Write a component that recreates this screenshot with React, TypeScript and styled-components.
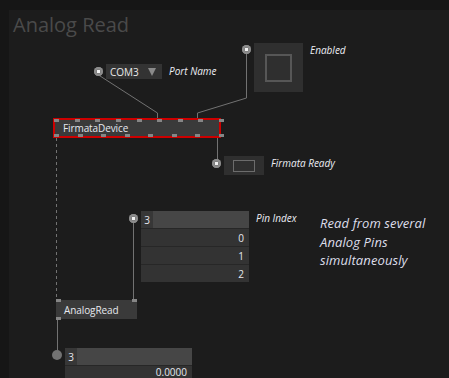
import React from "react";
import styled, { createGlobalStyle } from "styled-components";

const Global = createGlobalStyle`
  html, body { margin: 0; padding: 0; background: #161616; }
  body { font-family: "Open Sans", "Noto Sans", sans-serif; }
`;

type Pos = { $x: number; $y: number };

const Page = styled.div`
  position: relative;
  width: 449px;
  height: 378px;
  overflow: hidden;
  box-sizing: border-box;
  padding: 10px 0 0 9px;
  display: flex;
  background: #161616;
`;

const Patch = styled.div`
  flex: 1;
  background: #1c1c1c;
  padding: 2px 0 0 4px;
`;

const Title = styled.h1`
  margin: 0;
  font-weight: 400;
  font-size: 20px;
  line-height: 26px;
  color: #4a4a4a;
`;

const Links = styled.svg`
  position: absolute;
  left: 0;
  top: 0;
  pointer-events: none;
`;

/* An IO box on the canvas: pin, box and label laid out in a row */
const IOGroup = styled.div<Pos>`
  position: absolute;
  left: ${(p) => p.$x}px;
  top: ${(p) => p.$y}px;
  display: flex;
  align-items: flex-start;
  gap: 3px;
`;

const PinDot = styled.div<{ $solid?: boolean; $dy?: number }>`
  position: relative;
  flex: none;
  margin-top: ${(p) => p.$dy ?? (p.$solid ? 2 : 3)}px;
  width: ${(p) => (p.$solid ? 10 : 9)}px;
  height: ${(p) => (p.$solid ? 10 : 9)}px;
  border-radius: 50%;
  background: ${(p) => (p.$solid ? "#727272" : "#7e7e7e")};
  box-shadow: ${(p) => (p.$solid ? "none" : "inset 0 0 0 2px #8c8c8c")};
  &::after {
    content: "";
    display: ${(p) => (p.$solid ? "none" : "block")};
    position: absolute;
    left: 3px;
    top: 3px;
    width: 3px;
    height: 3px;
    background: #f2f2f2;
  }
`;

const Label = styled.div`
  margin-left: 4px;
  font-style: italic;
  font-size: 10px;
  line-height: 14px;
  color: #eceef4;
  white-space: nowrap;
`;

const Comment = styled.div<Pos>`
  position: absolute;
  left: ${(p) => p.$x}px;
  top: ${(p) => p.$y}px;
  font-style: italic;
  font-size: 13px;
  letter-spacing: 0.1px;
  line-height: 18.5px;
  color: #dcdeea;
`;

const EnumBox = styled.div`
  width: 56px;
  height: 15px;
  background: #333;
  display: flex;
  align-items: center;
  justify-content: space-between;
  box-sizing: border-box;
  padding: 0 6px 0 4px;
  font-size: 10px;
  color: #eaeaea;
`;

const Arrow = styled.span`
  width: 0;
  height: 0;
  border-left: 4.5px solid transparent;
  border-right: 4.5px solid transparent;
  border-top: 8px solid #8a8a8a;
`;

const ToggleBox = styled.div<{ $w: number; $h: number }>`
  width: ${(p) => p.$w}px;
  height: ${(p) => p.$h}px;
  background: #2f2f2f;
  display: flex;
  align-items: center;
  justify-content: center;
`;

const ToggleMark = styled.div<{ $w: number; $h: number; $b: number; $c: string }>`
  width: ${(p) => p.$w}px;
  height: ${(p) => p.$h}px;
  box-sizing: border-box;
  border: ${(p) => p.$b}px solid ${(p) => p.$c};
`;

const Node = styled.div<Pos & { $w: number; $h: number; $selected?: boolean }>`
  position: absolute;
  left: ${(p) => p.$x}px;
  top: ${(p) => p.$y}px;
  width: ${(p) => p.$w}px;
  height: ${(p) => p.$h}px;
  box-sizing: border-box;
  background: #3a3a3a;
  border: ${(p) => (p.$selected ? "2px solid #cc0000" : "none")};
  padding-left: 8px;
  display: flex;
  align-items: center;
  font-size: 10px;
  letter-spacing: -0.1px;
  color: #e6e8ee;
`;

const NodePin = styled.span<{ $left: number; $bottom?: boolean }>`
  position: absolute;
  left: ${(p) => p.$left}px;
  ${(p) => (p.$bottom ? "bottom: -1px;" : "top: -1px;")}
  width: 5px;
  height: 3px;
  background: #868686;
`;

const Spread = styled.div<{ $w: number }>`
  width: ${(p) => p.$w}px;
  display: flex;
  flex-direction: column;
  gap: 1px;
  background: #272727;
  font-size: 10px;
  color: #e6e8ee;
`;

const CountRow = styled.div`
  height: 17px;
  display: flex;
  background: #464646;
`;

const CountCell = styled.div`
  width: 12px;
  background: #373737;
  display: flex;
  align-items: center;
  justify-content: center;
`;

const ValueRow = styled.div<{ $clipped?: boolean }>`
  height: 17px;
  background: #333;
  display: flex;
  align-items: ${(p) => (p.$clipped ? "flex-start" : "center")};
  line-height: ${(p) => (p.$clipped ? "12px" : "normal")};
  justify-content: flex-end;
  padding-right: 5px;
`;

function pinOffsets(n: number, width: number, inset: number) {
  const span = width - inset * 2 - 5;
  return Array.from({ length: n }, (_, i) => inset + (n === 1 ? 0 : (i * span) / (n - 1)));
}

export default function App() {
  const fdTop = pinOffsets(9, 168, -1);
  const fdBottom = pinOffsets(8, 168, -1);
  return (
    <>
      <Global />
      <Page>
        <Patch>
          <Title>Analog Read</Title>
        </Patch>

        <Links width={449} height={378}>
          <g stroke="#727272" strokeWidth={1} fill="none">
            <polyline points="98.5,75 157.5,113 157.5,118" />
            <polyline points="246.5,54 246.5,98 197.5,113 197.5,118" />
            <line x1={56.5} y1={138} x2={56.5} y2={300} strokeDasharray="3 3" />
            <line x1={217.5} y1={138} x2={217.5} y2={159} />
            <line x1={133.5} y1={222} x2={133.5} y2={300} />
            <line x1={57.5} y1={319} x2={57.5} y2={351} />
          </g>
        </Links>

        <IOGroup $x={94} $y={64}>
          <PinDot />
          <EnumBox>
            <span>COM3</span>
            <Arrow />
          </EnumBox>
          <Label>Port Name</Label>
        </IOGroup>

        <IOGroup $x={242} $y={43}>
          <PinDot $dy={2} />
          <ToggleBox $w={49} $h={49}>
            <ToggleMark $w={27} $h={28} $b={2} $c="#575757" />
          </ToggleBox>
          <Label>Enabled</Label>
        </IOGroup>

        <Node $x={53} $y={118} $w={168} $h={20} $selected>
          FirmataDevice
          {fdTop.map((l, i) => (
            <NodePin key={"t" + i} $left={l} />
          ))}
          {fdBottom.map((l, i) => (
            <NodePin key={"b" + i} $left={l} $bottom />
          ))}
        </Node>

        <IOGroup $x={212} $y={156}>
          <PinDot />
          <ToggleBox $w={40} $h={19}>
            <ToggleMark $w={22} $h={12} $b={1} $c="#6c6c6c" />
          </ToggleBox>
          <Label>Firmata Ready</Label>
        </IOGroup>

        <IOGroup $x={129} $y={211}>
          <PinDot />
          <Spread $w={108}>
            <CountRow>
              <CountCell>3</CountCell>
            </CountRow>
            <ValueRow>0</ValueRow>
            <ValueRow>1</ValueRow>
            <ValueRow>2</ValueRow>
          </Spread>
          <Label>Pin Index</Label>
        </IOGroup>

        <Comment $x={320} $y={214}>
          Read from several
          <br />
          Analog Pins
          <br />
          simultaneously
        </Comment>

        <Node $x={56} $y={300} $w={81} $h={19}>
          AnalogRead
          <NodePin $left={0} />
          <NodePin $left={76} />
          <NodePin $left={0} $bottom />
        </Node>

        <IOGroup $x={52} $y={348}>
          <PinDot $solid />
          <Spread $w={127}>
            <CountRow>
              <CountCell>3</CountCell>
            </CountRow>
            <ValueRow $clipped>0.0000</ValueRow>
          </Spread>
        </IOGroup>
      </Page>
    </>
  );
}
